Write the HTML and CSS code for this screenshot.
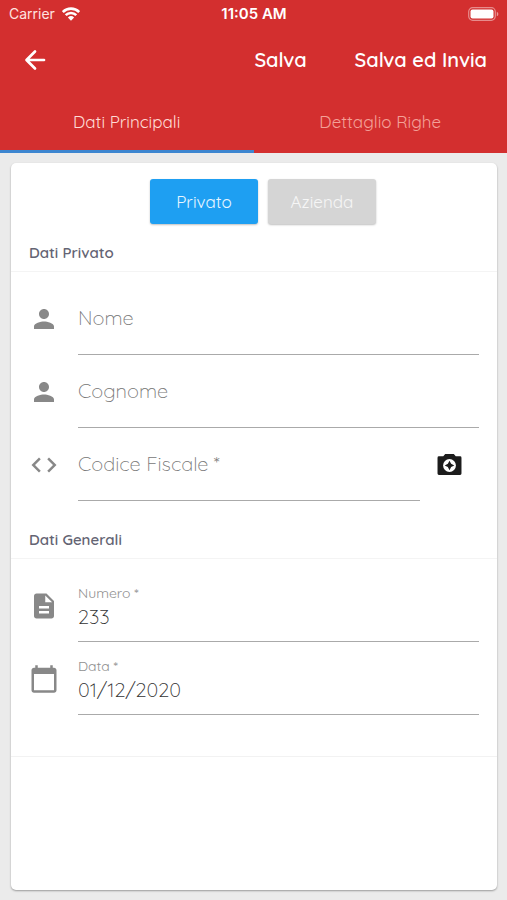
FILE: index.html
```html
<!DOCTYPE html>
<html lang="it">
<head>
<meta charset="utf-8">
<meta name="viewport" content="width=device-width, initial-scale=1">
<title>Dati Principali</title>
<link rel="stylesheet" href="styles.css">
</head>
<body>
<header class="header">
  <div class="status">
    <div class="carrier">
      <span>Carrier</span>
      <svg class="wifi" viewBox="0 0 18 14" aria-hidden="true">
        <path d="M.8 5a11.600 11.600 0 0 1 16.400 0M3.700 8.200a7.500 7.500 0 0 1 10.600 0" fill="none" stroke="currentColor" stroke-width="2.600"/>
        <path d="M5.900 10.500a4.500 4.500 0 0 1 6.200 0L9 13.700z" fill="currentColor"/>
      </svg>
    </div>
    <span class="time">11:05 AM</span>
    <svg class="battery" viewBox="0 0 31 14" aria-hidden="true">
      <rect x=".7" y=".7" width="26.600" height="12.600" rx="4" fill="none" stroke="#fff" stroke-opacity=".45" stroke-width="1.200"/>
      <rect x="2.500" y="2.500" width="23" height="9" rx="2" fill="#fff"/>
      <path d="M28.800 4.700v4.600q1.600-.7 1.600-2.300t-1.600-2.300z" fill="#fff" fill-opacity=".5"/>
    </svg>
  </div>
  <div class="toolbar">
    <button class="back" type="button" aria-label="Indietro">
      <svg viewBox="0 0 22 22" aria-hidden="true"><path d="M20 11H3M11 2.500L2.500 11l8.500 8.500" fill="none" stroke="currentColor" stroke-width="2.700" stroke-linecap="round" stroke-linejoin="round"/></svg>
    </button>
    <button class="action" type="button">Salva</button>
    <button class="action" type="button">Salva ed Invia</button>
  </div>
  <nav class="tabs">
    <a class="tab active" href="#principali" aria-current="page">Dati Principali</a>
    <a class="tab" href="#righe">Dettaglio Righe</a>
  </nav>
</header>
<main class="card" id="principali">
  <form>
    <div class="types">
      <button class="type selected" type="button">Privato</button>
      <button class="type" type="button">Azienda</button>
    </div>
    <h2 class="heading">Dati Privato</h2>
    <div class="fields">
      <div class="row">
        <svg class="icon" viewBox="0 0 24 24" aria-hidden="true"><path d="M12 12c2.210 0 4-1.790 4-4s-1.790-4-4-4-4 1.790-4 4 1.790 4 4 4zm0 2c-2.670 0-8 1.340-8 4v2h16v-2c0-2.660-5.330-4-8-4z"/></svg>
        <div class="field"><input class="empty" type="text" placeholder="Nome" aria-label="Nome"></div>
      </div>
      <div class="row">
        <svg class="icon" viewBox="0 0 24 24" aria-hidden="true"><path d="M12 12c2.210 0 4-1.790 4-4s-1.790-4-4-4-4 1.790-4 4 1.790 4 4 4zm0 2c-2.670 0-8 1.340-8 4v2h16v-2c0-2.660-5.330-4-8-4z"/></svg>
        <div class="field"><input class="empty" type="text" placeholder="Cognome" aria-label="Cognome"></div>
      </div>
      <div class="row">
        <svg class="icon" viewBox="0 0 24 24" aria-hidden="true"><path d="M9.400 16.600L4.800 12l4.600-4.600L8 6l-6 6 6 6 1.400-1.400zm5.200 0l4.600-4.600-4.600-4.600L16 6l6 6-6 6-1.400-1.400z"/></svg>
        <div class="field"><input class="empty" type="text" placeholder="Codice Fiscale *" aria-label="Codice Fiscale"></div>
        <button class="camera" type="button" aria-label="Scansiona codice fiscale">
          <svg viewBox="0 0 26 24" aria-hidden="true">
            <path fill="currentColor" d="M8.500 1h9l2 2.500H24q1.500 0 1.500 1.500v16.500q0 1.500-1.500 1.500H2Q.5 23 .5 21.500V5Q.5 3.500 2 3.500h4.500z"/>
            <circle cx="13" cy="13" r="6.700" fill="#fff"/>
            <path fill="currentColor" d="M13 8l1.700 3.300L18 13l-3.300 1.700L13 18l-1.700-3.300L8 13l3.300-1.700z"/>
          </svg>
        </button>
      </div>
    </div>
    <h2 class="heading">Dati Generali</h2>
    <div class="fields last">
      <div class="row">
        <svg class="icon" viewBox="0 0 24 24" aria-hidden="true"><path d="M14 2H6c-1.100 0-2 .9-2 2v16c0 1.100.9 2 2 2h12c1.100 0 2-.9 2-2V8l-6-6zm2 16H8v-2h8v2zm0-4H8v-2h8v2zm-3-5V3.500L18.500 9H13z"/></svg>
        <div class="field"><label for="numero">Numero *</label><input id="numero" type="text" value="233"></div>
      </div>
      <div class="row">
        <svg class="icon" viewBox="0 0 24 24" aria-hidden="true"><path d="M20 3h-1V1h-2v2H7V1H5v2H4c-1.100 0-2 .9-2 2v16c0 1.100.9 2 2 2h16c1.100 0 2-.9 2-2V5c0-1.100-.9-2-2-2zm0 18H4V8h16v13z"/></svg>
        <div class="field"><label for="data">Data *</label><input id="data" type="text" value="01/12/2020"></div>
      </div>
    </div>
  </form>
</main>
</body>
</html>
```
FILE: styles.css
```css
* {
  box-sizing: border-box;
}

body {
  margin: 0;
  min-height: 100vh;
  display: flex;
  flex-direction: column;
  background: #ebebeb;
  color: #333;
  font-family: Quicksand, Lato, sans-serif;
  font-size: 17px;
}

button,
input {
  margin: 0;
  padding: 0;
  border: 0;
  background: none;
  color: inherit;
  font: inherit;
}

svg {
  display: block;
}

.header {
  background: #d32f2f;
  color: #fff;
}

.status {
  display: grid;
  grid-template-columns: 1fr auto 1fr;
  align-items: center;
  height: 27px;
  padding: 0 8px 0 9px;
  font-family: Inter, sans-serif;
  font-size: 14px;
}

.carrier {
  display: flex;
  align-items: center;
  gap: 7px;
  color: #ffe3e0;
}

.wifi {
  width: 18px;
  height: 14px;
  color: #fff;
}

.time {
  font-size: 15px;
  font-weight: 600;
}

.battery {
  justify-self: end;
  width: 31px;
  height: 14px;
}

.toolbar {
  display: flex;
  align-items: center;
  gap: 48px;
  height: 65px;
  padding: 0 20px 0 24px;
}

.back {
  margin-right: auto;
}

.back svg {
  width: 22px;
  height: 22px;
}

.action {
  font-size: 20px;
  font-weight: 600;
}

.tabs {
  display: flex;
}

.tab {
  flex: 1;
  height: 61px;
  border-bottom: 3px solid transparent;
  color: #f4a198;
  line-height: 60px;
  text-align: center;
  text-decoration: none;
}

.tab.active {
  border-color: #3d86d0;
  color: #ffdcd6;
}

.card {
  flex: 1;
  margin: 10px 10px 10px 11px;
  border-radius: 5px;
  background: #fff;
  box-shadow: 0 1px 2px rgba(0, 0, 0, 0.35);
}

.types {
  display: flex;
  justify-content: center;
  gap: 10px;
  padding: 16px 0 10px 18px;
}

.type {
  width: 108px;
  height: 45px;
  border-radius: 3px;
  background: #d5d5d5;
  box-shadow: 0 1px 2px rgba(0, 0, 0, 0.25);
  color: #f6f6f6;
}

.type.selected {
  background: #1e9ff2;
  color: #e8f6ff;
}

.heading {
  height: 38px;
  margin: 0;
  padding: 0 18px;
  border-bottom: 1px solid #f4f4f4;
  color: #646473;
  font-size: 15px;
  font-weight: 600;
  line-height: 38px;
}

.fields {
  padding: 10px 18px 20px;
}

.fields.last {
  padding-bottom: 41px;
  border-bottom: 1px solid #f2f2f2;
}

.row {
  display: flex;
  align-items: center;
  height: 73px;
}

.icon {
  flex: none;
  width: 30px;
  height: 30px;
  margin-right: 19px;
  fill: #888;
}

.field {
  flex: 1;
  min-width: 0;
  height: 73px;
  padding-top: 15px;
  border-bottom: 1px solid #aaa;
}

.field:has(.empty) {
  padding-top: 0;
}

.field label {
  display: block;
  color: #909090;
  font-size: 14px;
  line-height: 18px;
}

.field input {
  display: block;
  width: 100%;
  height: 28px;
  font-size: 20px;
  font-weight: 300;
  outline: 0;
}

.field .empty {
  height: 71px;
}

.field input::placeholder {
  color: #777;
  opacity: 1;
}

.camera {
  margin: 0 17px;
  color: #1c1c1c;
}

.camera svg {
  width: 25px;
  height: 23px;
}
```
